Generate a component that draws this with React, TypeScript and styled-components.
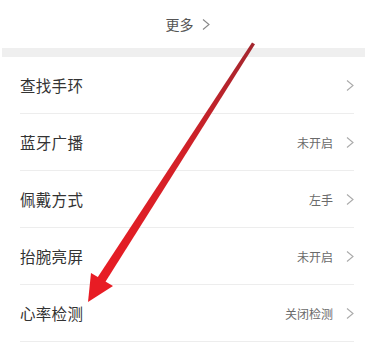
import styled, { createGlobalStyle } from "styled-components";

const Global = createGlobalStyle`
  html, body {
    margin: 0;
    padding: 0;
    background: #fff;
  }
  body {
    font-family: "Noto Sans CJK SC", "Noto Sans", sans-serif;
  }
`;

const Page = styled.div`
  position: relative;
  width: 365px;
  height: 342px;
  overflow: hidden;
  background: #fff;
`;

const MoreBar = styled.div`
  height: 48px;
  display: flex;
  justify-content: center;
  align-items: center;
  gap: 8px;
  font-size: 14px;
  color: #555;
  padding-left: 10px;
`;

const Band = styled.div`
  height: 9px;
  margin-left: 2px;
  background: #efefef;
`;

const List = styled.div`
  padding: 0 11px 0 20px;
`;

const Row = styled.div`
  height: 56px;
  display: flex;
  align-items: center;
  border-bottom: 1px solid #ededed;
`;

const Label = styled.div`
  flex: 1;
  font-size: 15.5px;
  color: #333;
  letter-spacing: 0.3px;
`;

const Value = styled.div`
  font-size: 12px;
  color: #6a6a6a;
  margin-right: 13px;
`;

const Arrow = styled.svg`
  position: absolute;
  left: 0;
  top: 0;
  pointer-events: none;
`;

function Chevron({ color = "#aaa", h = 11 }: { color?: string; h?: number }) {
  return (
    <svg width="8" height={h} viewBox="0 0 8 11" style={{ flexShrink: 0 }}>
      <path d="M1 0.5 L7 5.5 L1 10.5" fill="none" stroke={color} strokeWidth="1.1" />
    </svg>
  );
}

const rows = [
  { label: "查找手环", value: "" },
  { label: "蓝牙广播", value: "未开启" },
  { label: "佩戴方式", value: "左手" },
  { label: "抬腕亮屏", value: "未开启" },
  { label: "心率检测", value: "关闭检测" },
];

export default function App() {
  return (
    <Page>
      <Global />
      <MoreBar>
        <span>更多</span>
        <Chevron color="#888" h={11} />
      </MoreBar>
      <Band />
      <List>
        {rows.map((r) => (
          <Row key={r.label}>
            <Label>{r.label}</Label>
            {r.value ? <Value>{r.value}</Value> : null}
            <Chevron />
          </Row>
        ))}
      </List>
      <Arrow width="365" height="342" viewBox="0 0 365 342">
        <defs>
          <linearGradient id="ag" x1="253" y1="43" x2="100" y2="280" gradientUnits="userSpaceOnUse">
            <stop offset="0" stopColor="#a3262e" />
            <stop offset="0.45" stopColor="#d22128" />
            <stop offset="1" stopColor="#e81c24" />
          </linearGradient>
        </defs>
        <polygon points="252,42.5 255,44.2 105,282.5 97.5,277.6" fill="url(#ag)" />
        <polygon points="88,302 91,273 113,286" fill="#e81c24" />
      </Arrow>
    </Page>
  );
}
